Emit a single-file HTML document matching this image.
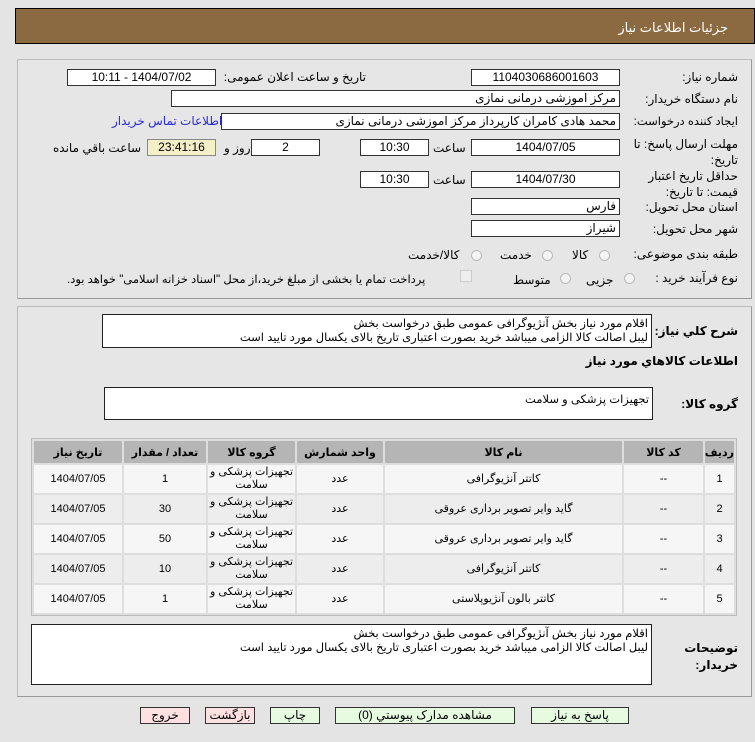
<!DOCTYPE html>
<html><head><meta charset="utf-8">
<style>
*{box-sizing:border-box;margin:0;padding:0}
body{width:755px;height:742px;background:#e4e4e4;font-family:"Liberation Sans","DejaVu Sans",sans-serif;font-size:12px;color:#000;position:relative;overflow:hidden;direction:rtl}
.a{position:absolute;white-space:nowrap}
.hdr{left:15px;top:8px;width:740px;height:36px;background:#8b6a42;border:1px solid #000}
.hdr span{position:absolute;right:26px;top:11px;color:#fff;font-size:13px}
.panel{position:absolute;border:1px solid #bbb;border-right-color:#999;border-bottom-color:#999;background:#e6e6e6}
.in{position:absolute;background:#fff;border:1px solid #333;height:17px;font-size:12px;line-height:15px;text-align:center;white-space:nowrap;overflow:hidden}
.inr{text-align:right;padding-right:3px}
.lbl{position:absolute;white-space:nowrap;font-size:12px;text-align:right}
.rad{position:absolute;width:11px;height:11px;border-radius:50%;border:1px solid #bbb;background:#f4f4f4}
.ta{position:absolute;background:#fff;border:1px solid #222;font-size:11.5px;text-align:right;padding:2px 3px;line-height:14px;white-space:nowrap;overflow:hidden}
table{position:absolute;left:31px;top:438px;width:706px;border:1px solid #bbb;border-spacing:2px;background:#dedede;table-layout:fixed}
th{background:#b5b5b5;height:22px;font-size:11px;font-weight:bold;white-space:nowrap;overflow:hidden}
td{text-align:center;font-size:11px;padding:0}
td div{height:28px;line-height:28px;white-space:nowrap;overflow:hidden}
td div.two{line-height:13px;padding-top:1px}
tr.o td{background:#f6f6f6}tr.e td{background:#ededed}
.btn{position:absolute;top:707px;height:17px;border:1px solid #333;font-size:12px;text-align:center;line-height:15px;white-space:nowrap}
.g{background:#e6fbe0}.p{background:#fde0e0}
</style></head><body>
<div class="a hdr"><span>جزئیات اطلاعات نیاز</span></div>

<div class="panel" style="left:17px;top:59px;width:735px;height:240px"></div>
<div class="lbl" style="right:17px;top:70px">شماره نیاز:</div>
<div class="in" style="left:471px;top:69px;width:149px">1104030686001603</div>
<div class="lbl" style="right:389px;top:70px">تاریخ و ساعت اعلان عمومی:</div>
<div class="in" style="left:67px;top:69px;width:149px">1404/07/02 - 10:11</div>

<div class="lbl" style="right:17px;top:92px">نام دستگاه خریدار:</div>
<div class="in inr" style="left:171px;top:90px;width:449px">مرکز اموزشی درمانی نمازی</div>

<div class="lbl" style="right:17px;top:114px;font-size:11.5px">ایجاد کننده درخواست:</div>
<div class="in inr" style="left:221px;top:113px;width:399px">محمد هادی کامران کارپرداز مرکز اموزشی درمانی نمازی</div>
<div class="lbl" style="left:112px;top:114px;color:#2a2ad8">اطلاعات تماس خریدار</div>

<div class="lbl" style="right:17px;top:136px;line-height:16px">مهلت ارسال پاسخ: تا<br>تاریخ:</div>
<div class="in" style="left:471px;top:139px;width:149px">1404/07/05</div>
<div class="lbl" style="left:433px;top:141px">ساعت</div>
<div class="in" style="left:360px;top:139px;width:69px">10:30</div>
<div class="in" style="left:251px;top:139px;width:69px">2</div>
<div class="lbl" style="left:224px;top:141px">روز و</div>
<div class="in" style="left:147px;top:139px;width:69px;background:#f3f0c8;border-color:#888">23:41:16</div>
<div class="lbl" style="left:53px;top:141px">ساعت باقي مانده</div>

<div class="lbl" style="right:17px;top:168px;line-height:16px">حداقل تاریخ اعتبار<br>قیمت: تا تاریخ:</div>
<div class="in" style="left:471px;top:171px;width:149px">1404/07/30</div>
<div class="lbl" style="left:433px;top:173px">ساعت</div>
<div class="in" style="left:360px;top:171px;width:69px">10:30</div>

<div class="lbl" style="right:17px;top:200px">استان محل تحویل:</div>
<div class="in inr" style="left:471px;top:198px;width:149px">فارس</div>
<div class="lbl" style="right:17px;top:222px">شهر محل تحویل:</div>
<div class="in inr" style="left:471px;top:220px;width:149px">شیراز</div>

<div class="lbl" style="right:17px;top:247px">طبقه بندی موضوعی:</div>
<div class="rad" style="left:599px;top:250px"></div><div class="lbl" style="left:572px;top:248px">کالا</div>
<div class="rad" style="left:542px;top:250px"></div><div class="lbl" style="left:500px;top:248px">خدمت</div>
<div class="rad" style="left:471px;top:250px"></div><div class="lbl" style="left:408px;top:248px">کالا/خدمت</div>

<div class="lbl" style="right:17px;top:271px">نوع فرآیند خرید :</div>
<div class="rad" style="left:624px;top:273px"></div><div class="lbl" style="left:586px;top:273px">جزیی</div>
<div class="rad" style="left:560px;top:273px"></div><div class="lbl" style="left:513px;top:273px">متوسط</div>
<div class="a" style="left:460px;top:270px;width:12px;height:12px;border:1px solid #ccc;background:#eee"></div>
<div class="lbl" style="left:67px;top:272px;font-size:11.5px">پرداخت تمام یا بخشی از مبلغ خرید،از محل "اسناد خزانه اسلامی" خواهد بود.</div>

<div class="panel" style="left:17px;top:306px;width:735px;height:391px"></div>
<div class="lbl" style="right:17px;top:324px;font-weight:bold">شرح کلي نیاز:</div>
<div class="ta" style="left:102px;top:314px;width:550px;height:34px">اقلام مورد نیاز بخش آنژیوگرافی عمومی طبق درخواست بخش<br>لیبل اصالت کالا الزامی میباشد  خرید بصورت اعتباری تاریخ بالای یکسال مورد تایید است</div>
<div class="lbl" style="right:17px;top:354px;font-weight:bold">اطلاعات کالاهاي مورد نیاز</div>
<div class="lbl" style="right:17px;top:397px;font-weight:bold">گروه کالا:</div>
<div class="ta" style="left:104px;top:387px;width:549px;height:33px;padding-top:5px">تجهیزات پزشکی و سلامت</div>

<table>
<colgroup><col style="width:29px"><col style="width:79px"><col style="width:237px"><col style="width:86px"><col style="width:87px"><col style="width:82px"><col></colgroup>
<tr><th>ردیف</th><th>کد کالا</th><th>نام کالا</th><th>واحد شمارش</th><th>گروه کالا</th><th>تعداد / مقدار</th><th>تاریخ نیاز</th></tr>
<tr class="o"><td><div>1</div></td><td><div>--</div></td><td><div>کاتتر آنژیوگرافی</div></td><td><div>عدد</div></td><td><div class="two">تجهیزات پزشکی و<br>سلامت</div></td><td><div>1</div></td><td><div>1404/07/05</div></td></tr>
<tr class="e"><td><div>2</div></td><td><div>--</div></td><td><div>گاید وایر تصویر برداری عروقی</div></td><td><div>عدد</div></td><td><div class="two">تجهیزات پزشکی و<br>سلامت</div></td><td><div>30</div></td><td><div>1404/07/05</div></td></tr>
<tr class="o"><td><div>3</div></td><td><div>--</div></td><td><div>گاید وایر تصویر برداری عروقی</div></td><td><div>عدد</div></td><td><div class="two">تجهیزات پزشکی و<br>سلامت</div></td><td><div>50</div></td><td><div>1404/07/05</div></td></tr>
<tr class="e"><td><div>4</div></td><td><div>--</div></td><td><div>کاتتر آنژیوگرافی</div></td><td><div>عدد</div></td><td><div class="two">تجهیزات پزشکی و<br>سلامت</div></td><td><div>10</div></td><td><div>1404/07/05</div></td></tr>
<tr class="o"><td><div>5</div></td><td><div>--</div></td><td><div>کاتتر بالون آنژیوپلاستی</div></td><td><div>عدد</div></td><td><div class="two">تجهیزات پزشکی و<br>سلامت</div></td><td><div>1</div></td><td><div>1404/07/05</div></td></tr>
</table>

<div class="lbl" style="right:17px;top:640px;font-weight:bold;line-height:17px">توضیحات<br>خریدار:</div>
<div class="ta" style="left:31px;top:624px;width:621px;height:61px">اقلام مورد نیاز بخش آنژیوگرافی عمومی طبق درخواست بخش<br>لیبل اصالت کالا الزامی میباشد  خرید بصورت اعتباری تاریخ بالای یکسال مورد تایید است</div>

<div class="btn g" style="left:531px;width:98px">پاسخ به نیاز</div>
<div class="btn g" style="left:335px;width:180px">مشاهده مدارک پیوستي (0)</div>
<div class="btn g" style="left:270px;width:50px">چاپ</div>
<div class="btn p" style="left:205px;width:50px">بازگشت</div>
<div class="btn p" style="left:140px;width:50px">خروج</div>
</body></html>
